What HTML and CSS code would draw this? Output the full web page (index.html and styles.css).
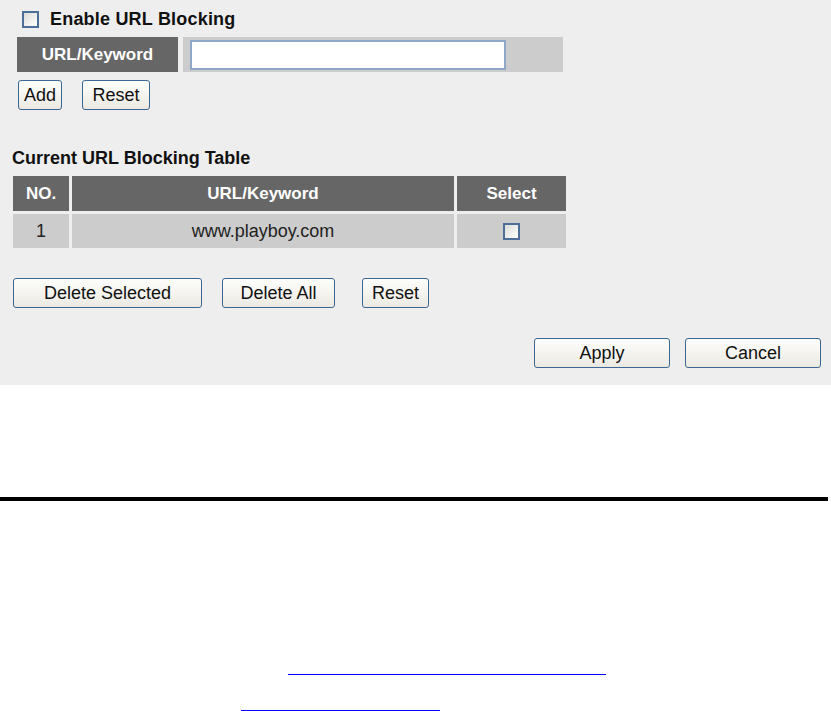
FILE: index.html
```html
<!DOCTYPE html>
<html>
<head>
    <title>URL Blocking</title>
    <link rel="stylesheet" href="styles.css">
</head>
<body>
    <div class="panel">
        <label class="enable">
            <input type="checkbox" class="box">
            <span>Enable URL Blocking</span>
        </label>

        <div class="url-row">
            <div class="url-label">URL/Keyword</div>
            <div class="url-field"><input type="text" class="url-input"></div>
        </div>

        <div class="btn-row add-row">
            <button class="btn btn-add">Add</button>
            <button class="btn btn-reset">Reset</button>
        </div>

        <h3 class="table-title">Current URL Blocking Table</h3>
        <table class="block-table">
            <colgroup>
                <col class="col-no">
                <col class="col-url">
                <col class="col-sel">
            </colgroup>
            <thead>
                <tr>
                    <th>NO.</th>
                    <th>URL/Keyword</th>
                    <th>Select</th>
                </tr>
            </thead>
            <tbody>
                <tr>
                    <td>1</td>
                    <td>www.playboy.com</td>
                    <td><input type="checkbox" class="box"></td>
                </tr>
            </tbody>
        </table>

        <div class="btn-row del-row">
            <button class="btn btn-del-sel">Delete Selected</button>
            <button class="btn btn-del-all">Delete All</button>
            <button class="btn btn-reset2">Reset</button>
        </div>

        <div class="actions">
            <button class="btn btn-wide">Apply</button>
            <button class="btn btn-wide">Cancel</button>
        </div>
    </div>

    <div class="rule"></div>

    <div class="links">
        <span class="link-line line-one"></span>
        <span class="link-line line-two"></span>
    </div>
</body>
</html>
```

FILE: styles.css
```css
body {
    margin: 0;
    font-family: "Liberation Sans", Arial, sans-serif;
    background: #ffffff;
    color: #111;
}
.panel {
    background: #eeeeee;
    height: 385px;
    box-sizing: border-box;
    padding-top: 10px;
}
.box {
    -webkit-appearance: none;
    appearance: none;
    width: 17px;
    height: 17px;
    margin: 0;
    box-sizing: border-box;
    border: 2px solid #4b6f98;
    background: linear-gradient(135deg, #dcdcd8, #ffffff);
}
.enable {
    display: flex;
    align-items: center;
    height: 18px;
    padding-left: 22px;
    font-size: 18px;
    font-weight: bold;
    color: #111;
}
.enable span {
    margin-left: 11px;
    letter-spacing: 0.2px;
}
.url-row {
    display: flex;
    margin-top: 9px;
    margin-left: 17px;
    gap: 5px;
    height: 35px;
}
.url-label {
    width: 161px;
    background: #666666;
    color: #fff;
    font-weight: bold;
    font-size: 17px;
    display: flex;
    align-items: center;
    justify-content: center;
}
.url-field {
    width: 380px;
    background: #cccccc;
    display: flex;
    align-items: center;
    padding-left: 7px;
    box-sizing: border-box;
}
.url-input {
    width: 316px;
    height: 30px;
    box-sizing: border-box;
    border: 2px solid #8ea7c6;
    background: #fff;
    margin: 0;
}
.btn-row {
    display: flex;
}
.btn {
    height: 30px;
    box-sizing: border-box;
    border: 1px solid #3a6793;
    border-radius: 3px;
    background: linear-gradient(#fefefc, #ebe9e2);
    font-family: "Liberation Sans", Arial, sans-serif;
    font-size: 18px;
    color: #111;
    padding: 0;
    margin: 0;
}
.add-row {
    margin-top: 8px;
    padding-left: 18px;
}
.btn-add {
    width: 44px;
}
.btn-reset {
    width: 68px;
    margin-left: 20px;
}
.table-title {
    margin: 38px 0 5px 12px;
    font-size: 18px;
    line-height: 20px;
    color: #111;
}
.block-table {
    margin-left: 10px;
    border-collapse: separate;
    border-spacing: 3px;
    table-layout: fixed;
    width: 559px;
}
.col-no { width: 56px; }
.col-url { width: 382px; }
.col-sel { width: 109px; }
.block-table th {
    background: #666666;
    color: #fff;
    font-size: 17px;
    height: 35px;
    padding: 0;
}
.block-table td {
    background: #cccccc;
    color: #222;
    font-size: 18px;
    height: 34px;
    padding: 0;
    text-align: center;
}
.block-table td .box {
    vertical-align: middle;
}
.del-row {
    margin-top: 27px;
    padding-left: 13px;
}
.btn-del-sel {
    width: 189px;
}
.btn-del-all {
    width: 113px;
    margin-left: 20px;
}
.btn-reset2 {
    width: 67px;
    margin-left: 27px;
}
.actions {
    display: flex;
    justify-content: flex-end;
    gap: 15px;
    margin-top: 30px;
    padding-right: 10px;
}
.btn-wide {
    width: 136px;
}
.rule {
    margin-top: 112px;
    width: 828px;
    height: 4px;
    background: #000;
}
.links {
    display: flex;
    flex-direction: column;
}
.link-line {
    display: block;
    height: 1px;
    background: #0000ff;
}
.line-one {
    margin-top: 173px;
    margin-left: 288px;
    width: 318px;
}
.line-two {
    margin-top: 35px;
    margin-left: 241px;
    width: 199px;
}
```
